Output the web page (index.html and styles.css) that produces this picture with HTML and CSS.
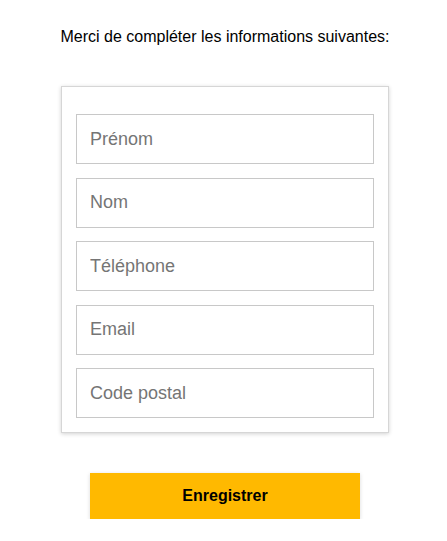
FILE: index.html
```html
<!DOCTYPE html>
<html lang="fr">
<head>
<meta charset="utf-8">
<title>Formulaire</title>
<link rel="stylesheet" href="styles.css">
</head>
<body>
<main class="page">
  <p class="intro">Merci de compléter les informations suivantes:</p>
  <form class="card">
    <input class="field" type="text" placeholder="Prénom">
    <input class="field" type="text" placeholder="Nom">
    <input class="field" type="tel" placeholder="Téléphone">
    <input class="field" type="email" placeholder="Email">
    <input class="field" type="text" placeholder="Code postal">
  </form>
  <button class="submit" type="button">Enregistrer</button>
</main>
</body>
</html>
```
FILE: styles.css
```css
html, body {
  margin: 0;
  padding: 0;
  background: #fff;
}
body {
  font-family: "Liberation Sans", Arial, sans-serif;
  color: #000;
}
.page {
  display: flex;
  flex-direction: column;
  align-items: center;
  padding: 28px 0 0 3px;
}
.intro {
  margin: 0;
  font-size: 16px;
  line-height: 18px;
}
.card {
  box-sizing: border-box;
  width: 328px;
  margin-top: 40px;
  padding: 27px 14px 14px;
  border: 1px solid #d6d6d6;
  background: #fff;
  box-shadow: 0 1px 4px rgba(0,0,0,0.18);
  display: flex;
  flex-direction: column;
  gap: 13.5px;
}
.field {
  box-sizing: border-box;
  display: block;
  width: 100%;
  height: 50px;
  margin: 0;
  padding: 0 13px;
  border: 1px solid #c8c8c8;
  border-radius: 0;
  font-family: "Liberation Sans", Arial, sans-serif;
  font-size: 18px;
  color: #333;
  background: #fff;
  outline: none;
}
.field::placeholder {
  color: #757575;
  opacity: 1;
}
.submit {
  box-sizing: border-box;
  width: 270px;
  height: 46px;
  margin-top: 40px;
  border: none;
  background: #ffb900;
  font-family: "Liberation Sans", Arial, sans-serif;
  font-size: 16px;
  font-weight: bold;
  color: #000;
  box-shadow: 0 1px 4px rgba(0,0,0,0.15);
  cursor: pointer;
}
```
